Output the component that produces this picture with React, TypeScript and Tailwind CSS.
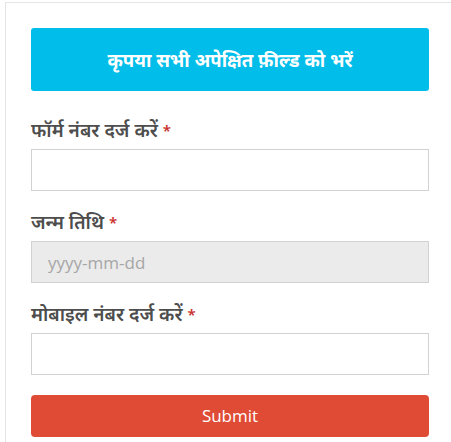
const fields = [
  { label: "फॉर्म नंबर दर्ज करें", placeholder: "", disabled: false },
  { label: "जन्म तिथि", placeholder: "yyyy-mm-dd", disabled: true },
  { label: "मोबाइल नंबर दर्ज करें", placeholder: "", disabled: false },
];

export default function App() {
  return (
    <div className="w-[451px] h-[442px] overflow-hidden bg-white pl-[5px] pt-[2px] font-['Noto_Sans',sans-serif]">
      <div className="h-[460px] border-l border-t border-[#e4e4e4] pl-[25px] pt-[25px] pr-[22px]">
        <div className="h-[63px] rounded-[3px] bg-[#00bde9] flex items-center justify-center text-white text-[18.5px] font-bold">
          कृपया सभी अपेक्षित फ़ील्ड को भरें
        </div>

        <form className="mt-[25px]" onSubmit={(e) => e.preventDefault()}>
          {fields.map((field, index) => (
            <div key={index} className="mb-[17px]">
              <label className="block h-[28px] mb-[5px] leading-[28px] text-[19px] font-semibold text-[#4d4d4d]">
                {field.label} <span className="text-[15px] align-top text-[#c9302c]">*</span>
              </label>
              <input
                type="text"
                placeholder={field.placeholder}
                disabled={field.disabled}
                className={`block w-full h-[42px] border border-[#d2d2d2] px-[16px] text-[17px] font-['Open_Sans',sans-serif] placeholder:text-[#a6a6a6] outline-none ${
                  field.disabled ? "bg-[#ebebeb]" : "bg-white"
                }`}
              />
            </div>
          ))}

          <button
            type="submit"
            className="block w-full h-[42px] mt-[20px] rounded-[4px] bg-[#e04b36] text-white text-[17px] font-['Open_Sans',sans-serif]"
          >
            Submit
          </button>
        </form>
      </div>
    </div>
  );
}
